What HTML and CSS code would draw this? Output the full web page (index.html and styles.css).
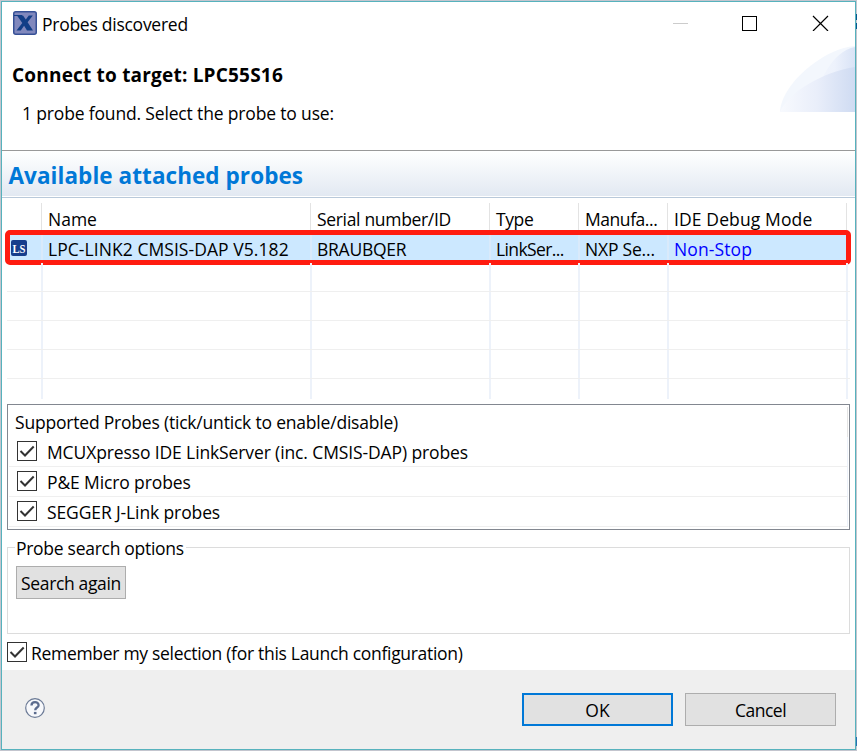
FILE: index.html
```html
<!DOCTYPE html>
<html lang="en">
<head>
<meta charset="utf-8">
<title>Probes discovered</title>
<link rel="stylesheet" href="styles.css">
</head>
<body>
<main class="window">
  <header class="titlebar">
    <svg class="app-icon" viewBox="0 0 24 24"><rect x=".75" y=".75" width="22.5" height="22.5" rx="2" fill="#8188bd" stroke="#365096" stroke-width="1.5"/><path d="M1 4.5H9" stroke="#123e87" stroke-width="1"/><path d="M4 4.500H10L12.800 8.500L15.800 4.500H19.800L14.600 11.300L20 19.500H14L11.100 14.800L7.800 19.500H3.500L9.300 12Z" fill="#123e87"/></svg>
    <span class="title t-title">Probes discovered</span>
    <svg class="controls" viewBox="0 0 160 16" shape-rendering="crispEdges"><path d="M0 8.500H15" stroke="#ccc"/><rect x="69.500" y="1.500" width="14" height="14" fill="none" stroke="#000"/><path d="M140 1L155 16M155 1L140 16" stroke="#000" stroke-width="1.200" shape-rendering="auto"/></svg>
  </header>
  <section class="intro">
    <div class="intro-text">
      <h1 class="t-h1">Connect to target: LPC55S16</h1>
      <p class="t-found">1 probe found. Select the probe to use:</p>
    </div>
    <svg class="swoosh" viewBox="0 0 75 66">
      <defs><linearGradient id="arc"><stop offset="0" stop-color="#f3f7fd"/><stop offset=".55" stop-color="#edf2fc"/><stop offset="1" stop-color="#d9e3f6"/></linearGradient><linearGradient id="low"><stop offset="0" stop-color="#f8fafe"/><stop offset=".5" stop-color="#e9eefa"/><stop offset="1" stop-color="#cfdbf2"/></linearGradient></defs>
      <path d="M0 66C1 38 44 2 75 0V66Z" fill="#f3f7fd"/><path d="M30 66C38 36 52 5 75 1V66Z" fill="url(#arc)"/><path d="M0 66C8 46 43 26 75 21V66Z" fill="url(#low)"/>
    </svg>
  </section>
  <h2 class="banner"><span class="t-h2">Available attached probes</span></h2>
  <section class="table">
    <div class="row head">
      <div class="cell"></div><div class="cell"><span class="t-name">Name</span></div><div class="cell"><span class="t-serial">Serial number/ID</span></div><div class="cell"><span class="t-type">Type</span></div><div class="cell"><span class="t-man">Manufa...</span></div><div class="cell"><span class="t-mode">IDE Debug Mode</span></div>
    </div>
    <div class="row selected">
      <div class="cell"><svg class="ls" viewBox="0 0 16 16"><rect width="16" height="16" rx="2" fill="#173d8c"/><text x="1.500" y="12.500" textLength="13" lengthAdjust="spacingAndGlyphs">LS</text></svg></div><div class="cell"><span class="t-lpc">LPC-LINK2 CMSIS-DAP V5.182</span></div><div class="cell"><span class="t-bra">BRAUBQER</span></div><div class="cell"><span class="t-link">LinkSer...</span></div><div class="cell"><span class="t-nxp">NXP Se...</span></div><div class="cell mode"><span class="t-non">Non-Stop</span></div>
      <div class="highlight"></div>
    </div>
    <div class="row"><div class="cell"></div><div class="cell"></div><div class="cell"></div><div class="cell"></div><div class="cell"></div><div class="cell"></div></div>
    <div class="row"><div class="cell"></div><div class="cell"></div><div class="cell"></div><div class="cell"></div><div class="cell"></div><div class="cell"></div></div>
    <div class="row"><div class="cell"></div><div class="cell"></div><div class="cell"></div><div class="cell"></div><div class="cell"></div><div class="cell"></div></div>
    <div class="row"><div class="cell"></div><div class="cell"></div><div class="cell"></div><div class="cell"></div><div class="cell"></div><div class="cell"></div></div>
    <div class="row last"><div class="cell"></div><div class="cell"></div><div class="cell"></div><div class="cell"></div><div class="cell"></div><div class="cell"></div></div>
  </section>
  <section class="supported">
    <div class="supported-title"><span class="t-sup">Supported Probes (tick/untick to enable/disable)</span></div>
    <label class="option"><svg class="check" viewBox="0 0 20 20"><rect x=".5" y=".5" width="19" height="19"/><path d="M3.500 10L8 14.500L16.700 5.500"/></svg><span class="t-mcu">MCUXpresso IDE LinkServer (inc. CMSIS-DAP) probes</span></label>
    <label class="option"><svg class="check" viewBox="0 0 20 20"><rect x=".5" y=".5" width="19" height="19"/><path d="M3.500 10L8 14.500L16.700 5.500"/></svg><span class="t-pe">P&amp;E Micro probes</span></label>
    <label class="option"><svg class="check" viewBox="0 0 20 20"><rect x=".5" y=".5" width="19" height="19"/><path d="M3.500 10L8 14.500L16.700 5.500"/></svg><span class="t-seg">SEGGER J-Link probes</span></label>
  </section>
  <section class="search">
    <div class="legend"><span class="t-opt">Probe search options</span></div>
    <button class="button again"><span class="t-again">Search again</span></button>
  </section>
  <label class="remember"><svg class="check" viewBox="0 0 20 20"><rect x=".5" y=".5" width="19" height="19"/><path d="M3.500 10L8 14.500L16.700 5.500"/></svg><span class="t-rem">Remember my selection (for this Launch configuration)</span></label>
  <footer class="footer">
    <svg class="help" viewBox="0 0 20 20"><circle cx="10" cy="10" r="9.300" fill="#f7f8fb" stroke="#6b7a96" stroke-width="1.200"/><path d="M6.500 7.400C6.500 3 13.600 3 13.600 7.200C13.600 9.600 10.200 9.500 10.200 12.300" fill="none" stroke="#5c6c8e" stroke-width="2.300"/><rect x="8.900" y="13.900" width="2.600" height="2.300" fill="#5c6c8e"/></svg>
    <button class="button ok"><span class="t-ok">OK</span></button>
    <button class="button cancel"><span class="t-cancel">Cancel</span></button>
  </footer>
</main>
</body>
</html>
```
FILE: styles.css
```css
* { box-sizing: border-box; }
body { margin: 0; width: 857px; height: 751px; padding: 1px; background: linear-gradient(#07578f, #07578f) 856px 14px / 1px 6px no-repeat, linear-gradient(#07578f, #07578f) 856px 23px / 1px 6px no-repeat, linear-gradient(#2a6fb0, #2a6fb0) 856px 737px / 1px 9px no-repeat, #c3c5ce; overflow: hidden; font: 17.5px/24px "Open Sans", "Noto Sans", sans-serif; color: #000; }
h1, h2, p { margin: 0; }
span { white-space: nowrap; }
.window { width: 855px; height: 749px; border: 1px solid #56b2bd; background: #fff; display: flex; flex-direction: column; }
.titlebar { height: 44px; flex: none; display: flex; padding: 9px 22px 0 11px; }
.app-icon { width: 24px; height: 24px; flex: none; }
.title { margin: 1px 0 0 5px; }
.controls { width: 160px; height: 16px; margin: 4px 0 0 auto; flex: none; }
.intro { height: 104px; flex: none; display: flex; justify-content: space-between; }
.intro-text { padding: 17px 0 0 10px; }
h1 { font-size: 19px; line-height: 24px; font-weight: 700; }
.intro p { margin: 14px 0 0 10px; }
.swoosh { width: 75px; height: 66px; }
.banner { height: 48px; flex: none; padding: 12px 0 0 6.500px; border-top: 1px solid #999; border-bottom: 1px solid #b9c9da; background: linear-gradient(#fff, #e2e9f2) 0 0 / 100% 45px no-repeat; color: #0078d7; font-size: 22.5px; line-height: 26px; }
.table { width: 843px; height: 206px; flex: none; margin-left: 5px; padding-top: 5px; }
.row { display: grid; grid-template-columns: 36px 269px 179px 89px 89px 179px; height: 29px; border-bottom: 1px solid #efefef; position: relative; }
.cell { border-right: 2px solid #edf2fa; padding-left: 5px; overflow: hidden; }
.row .cell:first-child { padding: 5px 0 0 4px; }
.head { height: 30px; border: 0; }
.head .cell { border-right: 1px solid #e3e3e3; margin-right: 1px; padding-top: 4px; }
.selected { height: 30px; background: #cce8ff; border: 0; padding: 0; }
.selected .cell { border-right-color: #d9eafb; padding-top: 4px; line-height: 24px; }
.last { height: 20px; border: 0; }
.ls { width: 16px; height: 16px; display: block; margin-top: 2px; overflow: visible; }
.ls text { font: bold 13px "Liberation Serif", serif; fill: #fff; }
.mode { color: #00f; }
.highlight { position: absolute; left: -2px; top: -3px; width: 846px; height: 35px; border: 5px solid #ff1c10; border-radius: 5px; }
.supported { width: 843px; height: 126px; flex: none; margin-left: 5px; border: 1px solid #828790; padding: 2px 1px 0; }
.supported-title { height: 30px; padding: 3px 0 0 6px; border-right: 1px solid #e4e4e4; }
.option { height: 30px; display: flex; padding: 4px 0 0 8px; gap: 10px; border-bottom: 1px solid #efefef; border-right: 1px solid #edf2fa; }
.option span { margin-top: -1px; }
.check { width: 20px; height: 20px; flex: none; fill: #fff; stroke: #333; }
.check path { fill: none; stroke-width: 2; }
.search { width: 843px; height: 87px; flex: none; margin: 17px 0 0 5px; border: 1px solid #dcdcdc; padding: 0 8px; }
.legend { height: 18px; line-height: 24px; margin-top: -12px; margin-left: -1px; }
.legend span { display: inline-block; height: 22px; background: #fff; padding: 0 2px 0 1px; }
.button { display: block; height: 33px; background: #e1e1e1; border: 1px solid #adadad; border-radius: 0; padding: 1px 0 0; color: #000; font: inherit; line-height: 30px; }
.again { width: 110px; margin-top: 12px; text-align: center; }
.remember { height: 36px; flex: none; display: flex; padding: 8px 0 0 5px; gap: 4px; }
.remember span { margin-top: -1px; }
.footer { flex: 1; display: flex; background: #efefef; padding: 23px 19px 0 23px; }
.help { width: 20px; height: 20px; margin-top: 5px; }
.ok { width: 151px; margin-left: auto; border: 2px solid #0078d7; line-height: 28px; }
.cancel { width: 151px; margin-left: 12px; }
.t-title { letter-spacing: -.26px; }
.t-h1 { letter-spacing: .2px; }
.t-found { letter-spacing: -.16px; }
.t-h2 { letter-spacing: .06px; }
.t-serial { letter-spacing: -.32px; }
.t-type { letter-spacing: -.4px; }
.t-man { letter-spacing: -.45px; }
.t-mode { letter-spacing: .12px; }
.t-lpc { letter-spacing: .06px; }
.t-bra { letter-spacing: -.25px; }
.t-link { letter-spacing: -.6px; }
.t-nxp { letter-spacing: -.2px; }
.t-non { letter-spacing: .1px; }
.t-sup { letter-spacing: -.2px; }
.t-mcu, .t-pe, .t-seg { letter-spacing: -.12px; }
.t-opt { letter-spacing: -.28px; }
.t-again { letter-spacing: -.35px; }
.t-rem { letter-spacing: -.3px; }
.t-cancel { letter-spacing: -.5px; }
```
